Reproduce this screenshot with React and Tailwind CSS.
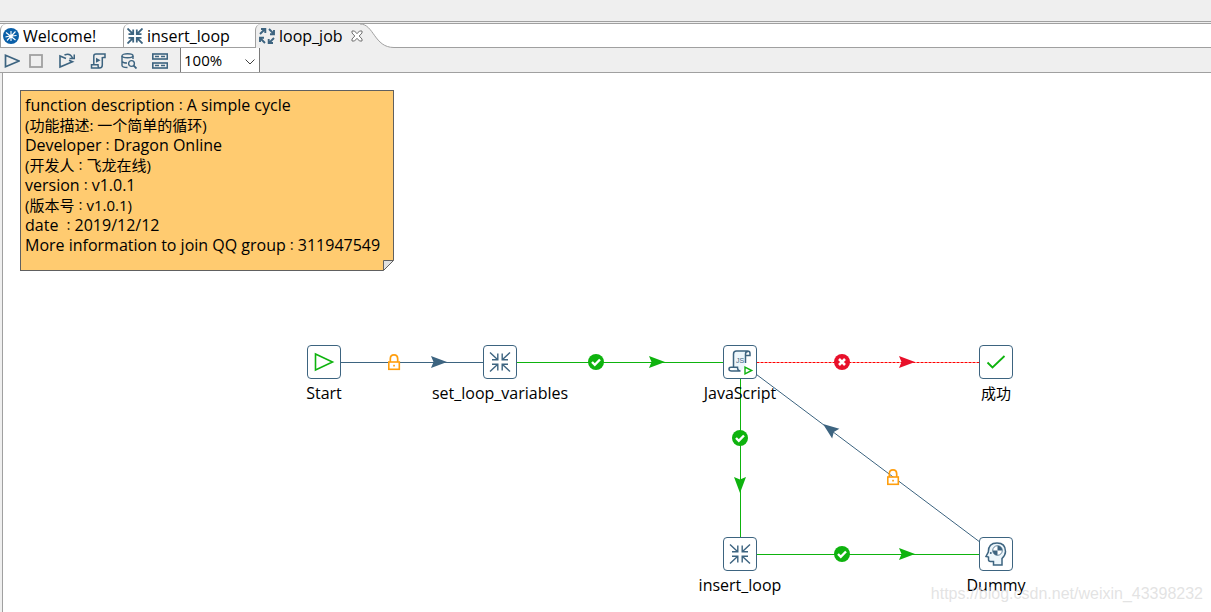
import { useState } from "react";

const STEEL = "#3d6480";
const GREEN = "#0eb30e";
const RED = "#e8102a";
const ORANGE = "#ff9e0d";

const noteLines = [
  { text: "function description：A simple cycle" },
  { text: "(功能描述: 一个简单的循环)", zh: true },
  { text: "Developer：Dragon Online" },
  { text: "(开发人：飞龙在线)", zh: true },
  { text: "version：v1.0.1" },
  { text: "(版本号：v1.0.1)", zh: true },
  { text: "date ：2019/12/12" },
  { text: "More information to join QQ group：311947549" },
];

// x / y are the centre of the node on the canvas
const nodes = [
  { id: "start", label: "Start", x: 321, y: 289, Icon: StartIcon },
  { id: "vars", label: "set_loop_variables", x: 497, y: 289, Icon: TransIcon },
  { id: "js", label: "JavaScript", x: 737, y: 289, Icon: ScriptJsIcon },
  { id: "ok", label: "成功", x: 993, y: 289, Icon: SuccessIcon, zh: true },
  { id: "insert", label: "insert_loop", x: 737, y: 481, Icon: TransIcon },
  { id: "dummy", label: "Dummy", x: 993, y: 481, Icon: DummyIcon },
];

const hops = [
  { from: "js", to: "insert", color: GREEN, badge: "check", at: [737, 365], tip: [737, 420], angle: 90 },
  { from: "dummy", to: "js", color: STEEL, badge: "lock", at: [890, 404], tip: [820, 351], angle: 217 },
  { from: "start", to: "vars", color: STEEL, badge: "lock", at: [391, 289], tip: [444, 289], angle: 0 },
  { from: "vars", to: "js", color: GREEN, badge: "check", at: [593, 289], tip: [662, 289], angle: 0 },
  { from: "js", to: "ok", color: RED, badge: "cross", at: [839, 289], tip: [912, 289], angle: 0, dashed: true },
  { from: "insert", to: "dummy", color: GREEN, badge: "check", at: [839, 481], tip: [912, 481], angle: 0 },
];

/* ---------- node icons ---------- */

function StartIcon() {
  return (
    <svg width="24" height="24" viewBox="0 0 24 24" fill="none">
      <path d="M3.5 4 L20.5 12 L3.5 20 Z" stroke={GREEN} strokeWidth="1.6" />
    </svg>
  );
}

function TransIcon() {
  return (
    <svg width="24" height="24" viewBox="0 0 24 24" fill="none" stroke={STEEL} strokeWidth="1.4">
      <path d="M2 2.5 L9.5 9.5 M9.8 3.5 V9.8 H4" />
      <path d="M22 2.5 L14.5 9.5 M14.2 3.5 V9.8 H20" />
      <path d="M2 21.5 L9.5 14.5 M9.8 20.5 V14.2 H4" />
      <path d="M22 21.5 L14.5 14.5 M14.2 20.5 V14.2 H20" />
    </svg>
  );
}

function ScriptJsIcon() {
  return (
    <svg width="28" height="28" viewBox="0 0 28 28" fill="none">
      <path
        d="M8 20 V5 Q8 3 10 3 H22 Q19.5 3.5 19.5 6.5 V18 L15 23 H6 Q8 22.5 8 20 Z"
        fill="#edf6fb"
      />
      <path
        d="M7.5 19 V6 Q7.5 3 10.5 3 H21.5 Q24 3 24 5.5 V7.5 H20 M19.5 15 V6 Q19.5 3.5 22 3.5"
        stroke={STEEL}
        strokeWidth="1.5"
      />
      <path
        d="M14.5 23 H5.5 Q3 23 3 21 Q3 19.3 5 19.3 H11.5 Q11.5 23 14.5 23"
        stroke={STEEL}
        strokeWidth="1.5"
      />
      <text x="10" y="15" fontSize="7" fontFamily="Liberation Sans, sans-serif" fill={STEEL}>
        JS
      </text>
      <path d="M19 19.2 L25.7 22.5 L19 25.8 Z" fill="#fff" stroke={GREEN} strokeWidth="1.4" />
    </svg>
  );
}

function SuccessIcon() {
  return (
    <svg width="24" height="24" viewBox="0 0 24 24" fill="none">
      <path d="M3.5 12.5 L8.5 17.5 L20.5 6" stroke={GREEN} strokeWidth="1.8" />
    </svg>
  );
}

function DummyIcon() {
  return (
    <svg width="28" height="28" viewBox="0 0 28 28" fill="none">
      <path
        d="M11.5 25 V21.5 H8.5 Q6.5 21.5 6.5 19.5 V17 L4 16.5 L6.3 12 Q6.3 3 15 3 Q23.5 3 23.5 11.5 Q23.5 15 20 18.5 V25 Z"
        fill="#edf6fb"
        stroke={STEEL}
        strokeWidth="1.5"
      />
      <circle cx="15.5" cy="10.5" r="4.8" fill="#fff" stroke={STEEL} strokeWidth="0.8" />
      <path d="M15.5 10.5 V5.7 A4.8 4.8 0 0 1 20.3 10.5 Z" fill={STEEL} />
      <path d="M15.5 10.5 V15.3 A4.8 4.8 0 0 1 10.7 10.5 Z" fill={STEEL} />
      <circle cx="8.8" cy="13" r="1" fill={STEEL} />
    </svg>
  );
}

/* ---------- hop badges ---------- */

function HopBadge({ type, at }) {
  const place = `translate(${at[0]} ${at[1]})`;
  if (type === "lock") {
    return (
      <g transform={place} fill="none" stroke={ORANGE}>
        <path d="M-3.7 0 V-3 Q-3.7 -7.2 0 -7.2 Q3.7 -7.2 3.7 -3 V0" strokeWidth="1.7" />
        <rect x="-5.2" y="0" width="10.5" height="7.3" fill="#fff" strokeWidth="1.6" />
        <rect x="-0.8" y="2.8" width="1.7" height="1.7" fill={ORANGE} stroke="none" />
      </g>
    );
  }
  return (
    <g transform={place} fill="none" stroke="#fff">
      <circle r="8" fill={type === "check" ? GREEN : RED} stroke="none" />
      {type === "check" ? (
        <path d="M-4 0 L-1.2 2.8 L4 -2.5" strokeWidth="2.4" />
      ) : (
        <path d="M-3 -3 L3 3 M3 -3 L-3 3" strokeWidth="2.6" />
      )}
    </g>
  );
}

function Hops() {
  const find = (id) => nodes.find((n) => n.id === id);
  return (
    <svg className="absolute inset-0 h-full w-full" aria-hidden="true">
      {hops.map((h) => {
        const a = find(h.from);
        const b = find(h.to);
        return (
          <g key={h.from + h.to}>
            <line
              x1={a.x + 0.5}
              y1={a.y + 0.5}
              x2={b.x + 0.5}
              y2={b.y + 0.5}
              stroke={h.dashed ? "#ff0000" : h.color}
              strokeWidth="1"
              strokeDasharray={h.dashed ? "3 1" : undefined}
            />
            <path
              d="M0 0 L-16 -6 L-13.5 0 L-16 6 Z"
              fill={h.color}
              transform={`translate(${h.tip[0]} ${h.tip[1]}) rotate(${h.angle})`}
            />
            <HopBadge type={h.badge} at={h.at} />
          </g>
        );
      })}
    </svg>
  );
}

function Node({ node }) {
  const { Icon } = node;
  return (
    <div
      className="absolute flex w-40 -translate-x-1/2 flex-col items-center"
      style={{ left: node.x, top: node.y - 17 }}
    >
      <div className="flex size-[34px] items-center justify-center rounded-sm border border-[#3d6480] bg-white">
        <Icon />
      </div>
      <span className={`mt-1 leading-5 whitespace-nowrap ${node.zh ? "text-[15px]" : ""}`}>
        {node.label}
      </span>
    </div>
  );
}

/* ---------- tab icons ---------- */

function WelcomeIcon() {
  return (
    <svg width="16" height="16" viewBox="0 0 16 16" fill="none">
      <circle cx="8" cy="8" r="8" fill="#0a5fa8" />
      <path
        d="M3 4.5 L12.5 12 M12.5 3.5 L4 12.5 M2.5 9 L7 8 M8 3 V7 M9 8 L13.5 7.5 M8 9 V13"
        stroke="#fff"
        strokeWidth="1.1"
      />
      <circle cx="8" cy="8" r="1.6" fill="#fff" />
    </svg>
  );
}

function TransTabIcon() {
  return (
    <svg width="16" height="16" viewBox="0 0 16 16" fill="none" stroke={STEEL} strokeWidth="1.8">
      <path d="M0.5 0.5 L6 6 M6.2 1.5 V6.2 H1.5" />
      <path d="M15.5 0.5 L10 6 M9.8 1.5 V6.2 H14.5" />
      <path d="M0.5 15.5 L6 10 M6.2 14.5 V9.8 H1.5" />
      <path d="M15.5 15.5 L10 10 M9.8 14.5 V9.8 H14.5" />
    </svg>
  );
}

function JobTabIcon() {
  return (
    <svg
      width="16"
      height="16"
      viewBox="0 0 16 16"
      className="shrink-0"
      fill="none"
      stroke={STEEL}
      strokeWidth="1.9"
    >
      <path d="M1 6 L6 1 M2 1 H6.3 V5" />
      <path d="M10 1 L15 6 M15 2 V6.3 H11" />
      <path d="M6 15 L1 10 M1 14 V9.7 H5" />
      <path d="M15 10 L10 15 M14 15 H9.7 V11" />
    </svg>
  );
}

function CloseIcon() {
  return (
    <svg width="12" height="12" viewBox="0 0 12 12" fill="#fff" stroke="#707070">
      <path d="M1 1 H3.5 L6 3.7 L8.5 1 H11 V3 L8.2 6 L11 9 V11 H8.5 L6 8.3 L3.5 11 H1 V9 L3.8 6 L1 3 Z" />
    </svg>
  );
}

/* ---------- toolbar icons ---------- */

const toolIcons = [
  {
    name: "Run",
    art: <path d="M1.5 2.3 L15 8 L1.5 13.7 Z" stroke={STEEL} strokeWidth="1.7" />,
  },
  {
    name: "Stop",
    art: <rect x="2" y="2" width="12" height="12" stroke="#a0a0a0" strokeWidth="1.8" />,
  },
  {
    name: "Replay",
    art: (
      <g stroke={STEEL} strokeWidth="1.6">
        <path d="M7 5.5 L1 3 V14 L13.5 8.7 L10 7.2" />
        <path d="M5.5 2 Q11 -0.5 13.5 5 M15.3 1.5 V5.5 H10.5" />
      </g>
    ),
  },
  {
    name: "Script",
    art: (
      <g stroke={STEEL} strokeWidth="1.5">
        <path d="M3.8 11.5 V3 Q3.8 1 6 1 H15 V4.5 H12.5 M12.3 4 V12 Q12.3 15 9.5 15 H1.5 V11.8 H8 Q8 15 9.5 15" />
        <path d="M6 4.8 L10.5 7.3 L6 9.8 Z" fill={STEEL} stroke="none" />
      </g>
    ),
  },
  {
    name: "Explore database",
    art: (
      <g stroke={STEEL} strokeWidth="1.4">
        <ellipse cx="6.5" cy="2.8" rx="5.5" ry="2" />
        <path d="M1 3 V12.5 Q1 14.3 6.5 14.5 M12 3 V6 M1 8.5 Q2 10 6 10" />
        <circle cx="10.5" cy="10.5" r="2.9" />
        <path d="M12.7 12.7 L15.5 15.5" strokeWidth="1.8" />
      </g>
    ),
  },
  {
    name: "Show results",
    art: (
      <g stroke={STEEL} strokeWidth="1.6">
        <rect x="0.8" y="1" width="14.5" height="5" />
        <rect x="0.8" y="10" width="14.5" height="5" />
        <path d="M3 3.5 H7 M9 3.5 H13 M3 12.5 H7 M9 12.5 H13" />
      </g>
    ),
  },
];

function TabBar() {
  return (
    <div role="tablist" className="flex h-[25px] border-t border-[#a0a0a0] bg-white">
      <button
        role="tab"
        className="flex w-[123px] items-center gap-1 rounded-tl-md border-b border-l border-[#a0a0a0] pl-0.5"
      >
        <WelcomeIcon />
        Welcome!
      </button>
      <button
        role="tab"
        className="flex w-[132px] items-center gap-1 rounded-tl-md border-b border-l border-[#a0a0a0] pl-[3px]"
      >
        <TransTabIcon />
        insert_loop
      </button>
      {/* The close mark runs a little way into the curved end of the tab */}
      <button
        role="tab"
        aria-selected="true"
        className="z-10 flex w-[105px] items-center gap-1 rounded-tl-md border-l border-[#a0a0a0] bg-[#efefef] pl-[3px]"
      >
        <JobTabIcon />
        <span>loop_job</span>
        <span className="ml-1 shrink-0">
          <CloseIcon />
        </span>
      </button>
      <svg width="34" height="24" viewBox="0 0 34 24" className="shrink-0">
        <path d="M0 0 C14 0 14 23.5 34 23.5 V24 H0 Z" fill="#efefef" />
        <path d="M0 0 C14 0 14 23.5 34 23.5" fill="none" stroke="#a0a0a0" />
      </svg>
      <div className="flex-1 border-b border-[#a0a0a0]" />
    </div>
  );
}

function ToolButton({ icon }) {
  return (
    <button aria-label={icon.name} title={icon.name}>
      <svg width="16" height="16" viewBox="0 0 16 16" fill="none">
        {icon.art}
      </svg>
    </button>
  );
}

function Toolbar() {
  const [zoom, setZoom] = useState("100%");

  return (
    <div className="flex h-[25px] items-center border-b border-[#a0a0a0] pl-1">
      <div className="mr-2 flex pt-0.5">
        <ToolButton icon={toolIcons[0]} />
      </div>
      <div className="mr-3 flex gap-[15px] pt-0.5">
        {toolIcons.slice(1).map((icon) => (
          <ToolButton key={icon.name} icon={icon} />
        ))}
      </div>
      <div className="relative h-full w-20">
        <select
          aria-label="Zoom"
          value={zoom}
          onChange={(e) => setZoom(e.target.value)}
          className="h-full w-full appearance-none border-x border-[#7a7a7a] bg-white pl-[3px] text-[15px] leading-5"
        >
          <option>200%</option>
          <option>100%</option>
          <option>50%</option>
        </select>
        <svg
          width="10"
          height="6"
          viewBox="0 0 10 6"
          className="pointer-events-none absolute top-[11px] right-[5px]"
          fill="none"
        >
          <path d="M0.5 0.5 L5 5 L9.5 0.5" stroke="#404040" />
        </svg>
      </div>
    </div>
  );
}

// The full-width colon sits in the middle of its box in the TC face
function NoteLine({ line }) {
  const [before, after] = line.text.split("：");
  return (
    <p className={`leading-5 whitespace-pre ${line.zh ? "text-[15px]" : ""}`}>
      {before}
      {after !== undefined && (
        <span className="font-['Noto_Sans_CJK_TC',sans-serif] text-xs leading-4">：</span>
      )}
      {after}
    </p>
  );
}

function Note() {
  return (
    <div className="absolute top-[17px] left-[17px] h-[181px] w-[374px] border border-[#606060] bg-[#ffcb70] px-1 pt-1">
      {noteLines.map((line) => (
        <NoteLine key={line.text} line={line} />
      ))}
      <svg width="11" height="11" viewBox="0 0 11 11" className="absolute -right-px -bottom-px">
        <path d="M0 11 L11 0 V11 Z" fill="#fff" />
        <path d="M0.5 0.5 H10.5 L0.5 10.5 Z" fill="#e0e0e0" stroke="#606060" />
      </svg>
    </div>
  );
}

export default function App() {
  return (
    <div className="flex min-h-screen flex-col bg-[#efefef] font-['Open_Sans','Noto_Sans_CJK_SC',sans-serif] text-[16px] text-black">
      {/* Empty window toolbar */}
      <div className="mb-px h-[22px] border-b border-[#a0a0a0]" />

      <TabBar />
      <Toolbar />

      {/* Job canvas */}
      <main className="relative ml-0.5 min-h-[530px] flex-1 overflow-hidden border-l border-[#a0a0a0] bg-white">
        <Note />
        <Hops />
        {nodes.map((n) => (
          <Node key={n.id} node={n} />
        ))}
        <span className="absolute right-2 bottom-2 font-['Liberation_Sans',Arial,sans-serif] text-base leading-5 text-[#dcdcdc]/80">
          https://blog.csdn.net/weixin_43398232
        </span>
      </main>
    </div>
  );
}
